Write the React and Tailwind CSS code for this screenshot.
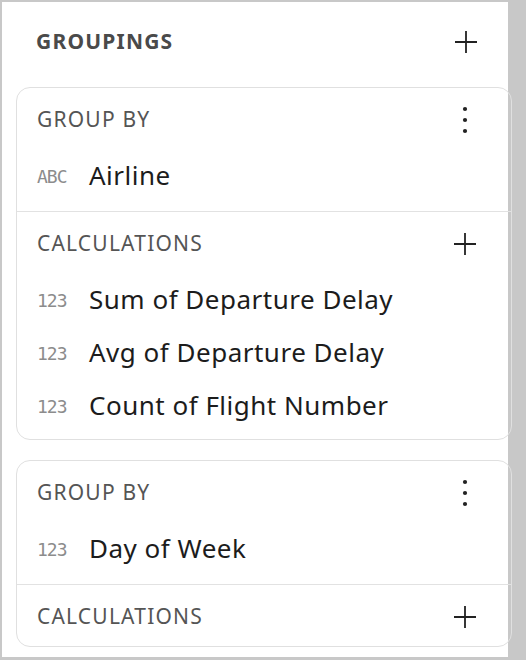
const PlusIcon = () => (
  <svg width="22" height="22" viewBox="0 0 22 22" fill="none">
    <path d="M11 0v22M0 11h22" stroke="#222" strokeWidth="1.8" />
  </svg>
);

const KebabIcon = () => (
  <svg width="6" height="28" viewBox="0 0 6 28" fill="#222">
    <circle cx="3" cy="3" r="2.1" />
    <circle cx="3" cy="14" r="2.1" />
    <circle cx="3" cy="25" r="2.1" />
  </svg>
);

function SectionHeader({ title, action }) {
  return (
    <div className="flex h-10 items-center justify-between pl-5 pr-[26px]">
      <span className="text-[21px] tracking-[1.2px] text-[#555]">{title}</span>
      <div className="flex w-10 items-center justify-center">
        {action === "more" ? <KebabIcon /> : <PlusIcon />}
      </div>
    </div>
  );
}

function FieldRow({ type, label }) {
  return (
    <div className="flex h-[53px] items-center pl-5">
      <span className="w-[52px] pt-[3px] font-['DejaVu_Sans_Mono',monospace] text-[18px] leading-none tracking-[-1px] text-[#8c8c8c]">
        {type}
      </span>
      <span className="text-[26px] tracking-[0.5px] text-[#1c1c1c]">{label}</span>
    </div>
  );
}

function Section({ title, action, items, pb }) {
  return (
    <div className={`pt-3 ${pb}`}>
      <SectionHeader title={title} action={action} />
      {items.length > 0 && (
        <div className="mt-[9px] flex flex-col">
          {items.map((it) => (
            <FieldRow key={it.label} type={it.type} label={it.label} />
          ))}
        </div>
      )}
    </div>
  );
}

function GroupCard({ groupBy, calcs }) {
  return (
    <div className="w-[496px] divide-y divide-[#e2e2e2] rounded-[14px] border border-[#e0e0e0]">
      <Section title="GROUP BY" action="more" items={[groupBy]} pb="pb-[9px]" />
      <Section
        title="CALCULATIONS"
        action="add"
        items={calcs}
        pb={calcs.length ? "pb-[7px]" : "pb-[9px]"}
      />
    </div>
  );
}

export default function App() {
  return (
    <div className="h-[660px] w-[526px] overflow-hidden bg-[#c8c8c8] pl-[2px] pt-[2px] font-['Noto_Sans',sans-serif]">
      <div className="h-[655px] w-[506px] bg-white pt-5">
        <div className="flex h-10 items-center justify-between pl-[34px] pr-[22px]">
          <span className="text-[21px] font-bold tracking-[1.2px] text-[#4a4a4a]">GROUPINGS</span>
          <div className="flex w-10 items-center justify-center">
            <PlusIcon />
          </div>
        </div>
        <div className="mt-[25px] flex flex-col gap-5 pl-[14px]">
          <GroupCard
            groupBy={{ type: "ABC", label: "Airline" }}
            calcs={[
              { type: "123", label: "Sum of Departure Delay" },
              { type: "123", label: "Avg of Departure Delay" },
              { type: "123", label: "Count of Flight Number" },
            ]}
          />
          <GroupCard groupBy={{ type: "123", label: "Day of Week" }} calcs={[]} />
        </div>
      </div>
    </div>
  );
}
